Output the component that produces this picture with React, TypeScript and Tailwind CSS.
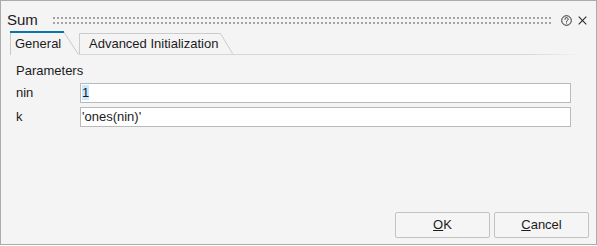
export default function App() {
  return (
    <div className="w-[597px] h-[245px] border border-[#ababab] bg-[#f4f4f4] flex flex-col font-['Liberation_Sans',Arial,sans-serif] text-[13px] text-[#1b1b1b]">
      {/* title bar */}
      <div className="flex items-center h-[20px] mt-[9px] pl-[6px] pr-[9px]">
        <span className="text-[15px] leading-[20px]">Sum</span>
        <svg className="ml-[15px] flex-1 h-[7px]" aria-hidden>
          <defs>
            <pattern id="grip" width="4" height="5" patternUnits="userSpaceOnUse">
              <rect x="0" y="0" width="2" height="2" fill="#a3a3a3" />
            </pattern>
          </defs>
          <rect x="0" y="0" width="100%" height="7" fill="url(#grip)" />
        </svg>
        <svg className="ml-[8px]" width="11" height="11" viewBox="0 0 11 11" fill="none" stroke="#2b2b2b" strokeWidth="1">
          <circle cx="5.5" cy="5.5" r="4.8" />
          <path d="M3.9 4.3a1.6 1.6 0 1 1 2.4 1.3c-.5.3-.8.6-.8 1.1v.3" strokeLinecap="round" />
          <circle cx="5.5" cy="8.2" r=".45" fill="#2b2b2b" stroke="none" />
        </svg>
        <svg className="ml-[6px]" width="9" height="9" viewBox="0 0 9 9" fill="none" stroke="#2b2b2b" strokeWidth="1.1">
          <path d="M.7.7l7.6 7.6M8.3.7L.7 8.3" />
        </svg>
      </div>

      {/* tabs */}
      <div className="flex mt-[1px] pl-[9px] h-[24px]">
        <div className="relative w-[69px] h-[24px] pl-[5px] pt-[5px] leading-[16px]">
          <svg className="absolute left-0 top-0" width="69" height="24" viewBox="0 0 69 24" fill="none">
            <path d="M.5 24V.5H53.5L68.5 23.5" stroke="#c9c9c9" />
            <rect x="0" y="0" width="54" height="2" fill="#0b74aa" />
          </svg>
          <span className="relative">General</span>
        </div>
        <div className="flex-1 flex flex-col">
          <div className="flex h-[23px]">
            <div className="relative w-[154px] h-[23px] pl-[10px] pt-[5px] leading-[16px]">
              <svg className="absolute left-0 top-0" width="154" height="23" viewBox="0 0 154 23" fill="none">
                <path d="M.5 23V2.5H141.5L153.5 22.5" stroke="#cbcbcb" />
              </svg>
              <span className="relative">Advanced Initialization</span>
            </div>
          </div>
          <div className="h-px mr-[12px] bg-[linear-gradient(to_right,#d6d6d6_88%,transparent)]" />
        </div>
      </div>

      {/* parameters */}
      <div className="pl-[15px] pr-[25px]">
        <div className="mt-[8px] leading-[16px]">Parameters</div>
        <div className="mt-[4px] flex flex-col gap-[4px]">
          <div className="flex items-center">
            <span className="w-[64px] leading-[16px]">nin</span>
            <div className="flex-1 h-[20px] border border-[#bababa] bg-white pl-[1px] leading-[18px]">
              <span className="bg-[#cce8ff]">1</span>
            </div>
          </div>
          <div className="flex items-center">
            <span className="w-[64px] leading-[16px]">k</span>
            <div className="flex-1 h-[20px] border border-[#bababa] bg-white pl-[1px] leading-[18px]">
              'ones(nin)'
            </div>
          </div>
        </div>
      </div>

      {/* buttons */}
      <div className="mt-auto flex justify-end gap-[4px] pr-[7px] pb-[6px]">
        <button className="w-[95px] h-[26px] border border-[#c2c2c2] rounded-[2px] bg-[#f5f5f5] text-[13px] leading-[24px]">
          <span className="underline">O</span>K
        </button>
        <button className="w-[95px] h-[26px] border border-[#c2c2c2] rounded-[2px] bg-[#f5f5f5] text-[13px] leading-[24px]">
          <span className="underline">C</span>ancel
        </button>
      </div>
    </div>
  );
}
